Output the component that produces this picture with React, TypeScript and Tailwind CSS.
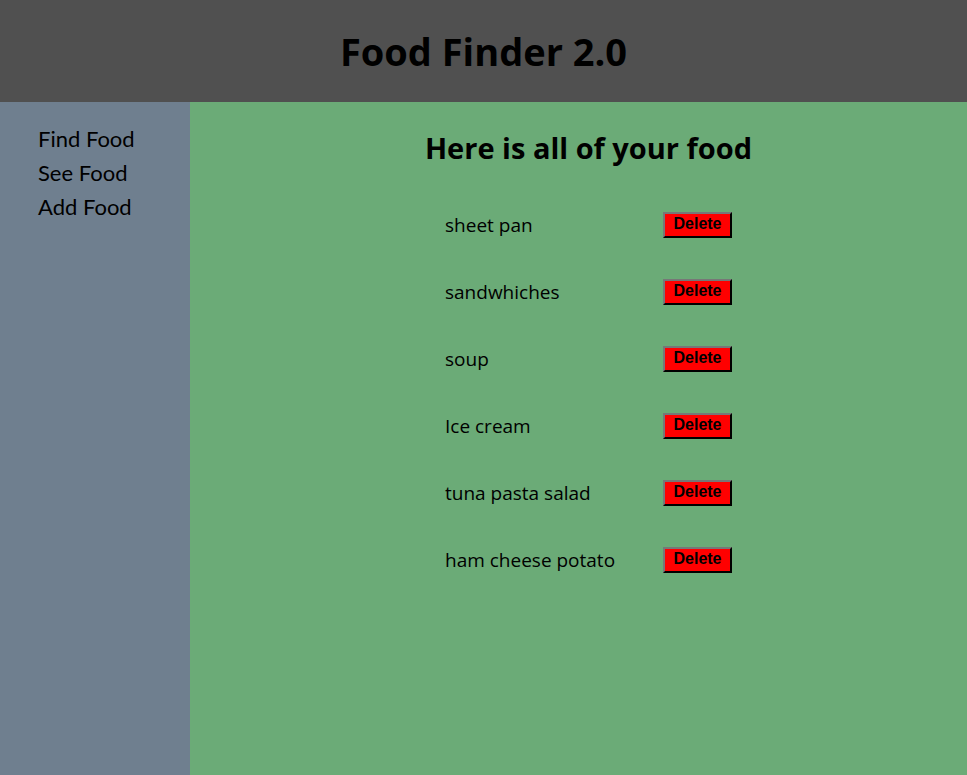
import React from "react";

const foods = [
  "sheet pan",
  "sandwhiches",
  "soup",
  "Ice cream",
  "tuna pasta salad",
  "ham cheese potato",
];

const App = () => {
  return (
    <div className="flex h-[775px] flex-col font-['Open_Sans',sans-serif] text-black">
      <header className="flex h-[102px] shrink-0 items-center justify-center bg-[#505050]">
        <h1 className="text-[38px] font-bold">Food Finder 2.0</h1>
      </header>

      <div className="flex flex-1">
        <nav className="flex w-[190px] shrink-0 flex-col bg-[#6f7f8f] pl-[38px] pt-[20px] font-['Lato',sans-serif] text-[22px] leading-[34px]">
          <a href="#">Find Food</a>
          <a href="#">See Food</a>
          <a href="#">Add Food</a>
        </nav>

        <main className="flex flex-1 flex-col items-center bg-[#6bab77] pl-5 pt-[27px]">
          <h2 className="text-[29px] font-bold leading-[38px]">
            Here is all of your food
          </h2>

          <div className="mt-[45px] flex flex-col gap-[41px]">
            {foods.map((food) => (
              <div key={food} className="flex h-[26px] items-center">
                <span className="w-[218px] text-[19px]">{food}</span>
                <button className="h-[26px] w-[69px] border-2 border-t-[#777] border-l-[#777] border-r-black border-b-black bg-[#ff0000] pb-[2px] font-['Liberation_Sans',sans-serif] text-[16px] font-bold leading-none">
                  Delete
                </button>
              </div>
            ))}
          </div>
        </main>
      </div>
    </div>
  );
};

export default App;
